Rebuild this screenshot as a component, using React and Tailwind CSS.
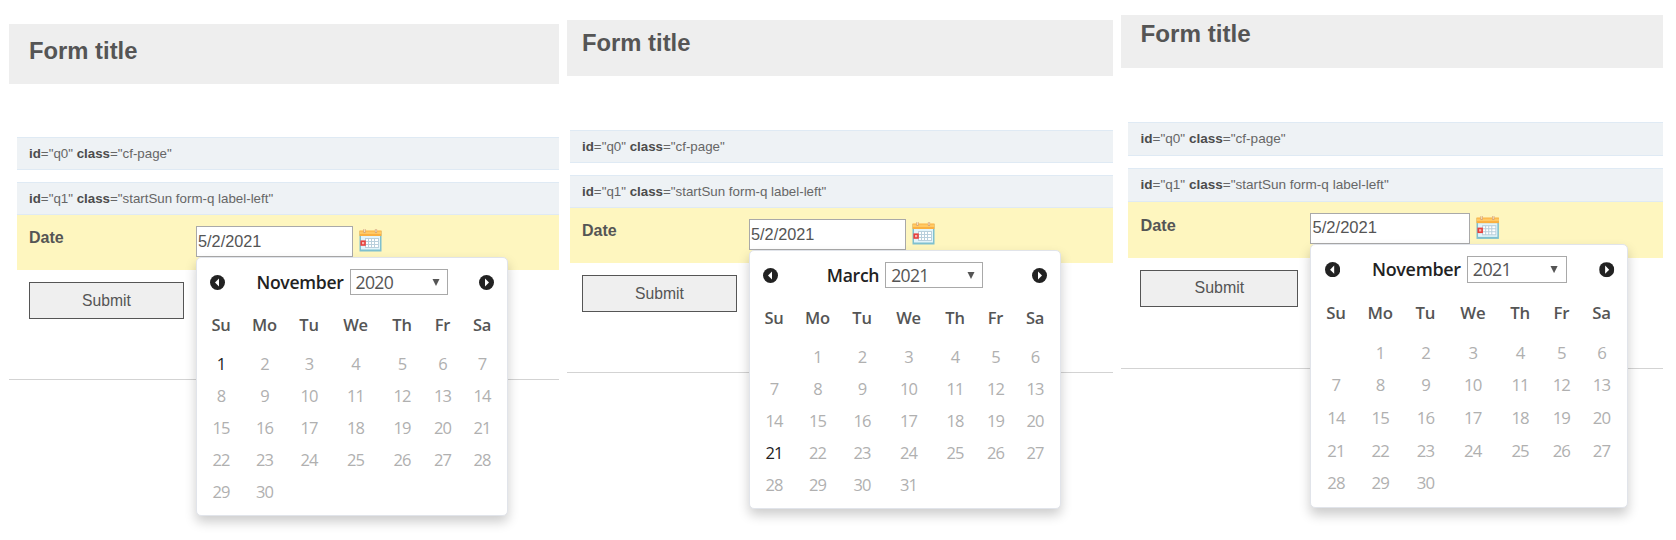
import clsx from 'clsx'

const WEEKDAYS = ['Su', 'Mo', 'Tu', 'We', 'Th', 'Fr', 'Sa']

const FORMS = [
  {
    id: 'nov-2020',
    month: 'November',
    year: '2020',
    offset: 0,
    days: 30,
    enabled: [1],
    panel: 'ml-[9px] mt-6 w-[550px]',
    header: 'h-[60px] mb-[53px] pl-5 pt-[13px]',
    body: 'pl-2',
  },
  {
    id: 'mar-2021',
    month: 'March',
    year: '2021',
    offset: 1,
    days: 31,
    enabled: [21],
    panel: 'ml-2 mt-5 w-[546px]',
    header: 'h-[56px] mb-[54px] pl-[15px] pt-[9px]',
    body: 'pl-[3px]',
  },
  {
    id: 'nov-2021',
    month: 'November',
    year: '2021',
    offset: 1,
    days: 30,
    enabled: [],
    panel: 'ml-2 mt-[15px] w-[532.4px] [zoom:1.018]',
    header: 'h-[52px] mb-[53px] pl-[19px] pt-[5px]',
    body: 'pl-[7px]',
  },
]

function CalendarIcon() {
  return (
    <svg width="23" height="23" viewBox="0 0 23 23" className="ml-[5.5px] mt-[3px]">
      <rect x="0.5" y="2" width="22" height="20.5" fill="#7fc0cf" />
      <rect x="2" y="7" width="19" height="13.5" fill="#e3f4fa" />
      <rect x="0.5" y="1.5" width="22" height="5.5" fill="#fbb040" />
      <rect x="0.5" y="2.5" width="22" height="2.5" fill="#ffc965" />
      <path d="M5.5 0v4M17 0v4" stroke="#d9a877" strokeWidth="2.2" />
      <path d="M5.5 0v3M17 0v3" stroke="#f4e3c4" strokeWidth="0.9" />
      <rect x="6" y="9" width="14" height="10" fill="#b9cfdc" />
      <path
        d="M7 10h2v2H7zM10 10h2v2h-2zM13 10h2v2h-2zM16 10h3v2h-3zM7 13h2v2H7zM10 13h2v2h-2zM13 13h2v2h-2zM16 13h3v2h-3zM7 16h2v2H7zM10 16h2v2h-2zM13 16h2v2h-2zM16 16h3v2h-3z"
        fill="#fff"
      />
      <rect x="2.2" y="12.2" width="3.8" height="3.8" fill="#f8b6b0" stroke="#e8403c" strokeWidth="1.6" />
    </svg>
  )
}

function NavArrow({ next }) {
  return (
    <svg width="15" height="15" viewBox="0 0 15 15" className={clsx(next && 'rotate-180')}>
      <circle cx="7.5" cy="7.5" r="7.5" fill="#222" />
      <path d="M9 3.5v8L5 7.5z" fill="#fff" />
    </svg>
  )
}

function DatePicker({ form }) {
  const cells = [
    ...Array.from({ length: form.offset }, () => null),
    ...Array.from({ length: form.days }, (_, i) => i + 1),
  ]
  return (
    <div className="absolute left-0 top-full z-10 h-[259px] w-[312px] rounded-[5px] border border-[#e1e4ea] bg-white font-['Open_Sans','Noto_Sans',sans-serif] shadow-[0_6px_12px_rgba(0,0,0,0.2)]">
      <div className="mt-[11px] flex h-[26px] items-center justify-between px-[13px]">
        <NavArrow />
        <div className="flex items-center gap-[6px]">
          <span className="text-[17.6px] leading-[26px] font-semibold tracking-[-0.3px] text-[#222]">{form.month}</span>
          <div className="flex h-[26px] w-[98px] items-center justify-between border border-[#a9a9a9] pr-[7px] pl-[5px]">
            <span className="text-[17.6px] leading-6 tracking-[-0.7px] text-[#555]">{form.year}</span>
            <svg width="8" height="7" viewBox="0 0 8 7">
              <path d="M0.5 0h7L4 7z" fill="#555" />
            </svg>
          </div>
        </div>
        <NavArrow next />
      </div>
      <div className="mt-[14px] ml-[4px] grid grid-cols-[40px_47px_42px_51px_42px_39px_40px] text-center text-[16.5px] leading-8">
        {WEEKDAYS.map((day) => (
          <span key={day} className="mb-[7px] font-semibold tracking-[-0.2px] text-[#555]">
            {day}
          </span>
        ))}
        {cells.map((day, i) => (
          <span
            key={i}
            className={clsx(
              'tracking-[-0.9px]',
              form.enabled.includes(day) ? 'font-medium text-[#222]' : 'text-[#b0b0b0]',
            )}
          >
            {day}
          </span>
        ))}
      </div>
    </div>
  )
}

function InfoRow({ id, className }) {
  return (
    <div className="h-[33px] border-y border-[#dfeaf4] bg-[#eef2f5] pl-3 text-[13.33px] leading-[31px] text-[#666]">
      <b className="text-[#4c4c4c]">id</b>="{id}" <b className="text-[#4c4c4c]">class</b>="{className}"
    </div>
  )
}

function FormPanel({ form }) {
  return (
    <section className={clsx('shrink-0', form.panel)}>
      <header className={clsx('bg-[#eee]', form.header)}>
        <h1 className="text-[23.8px] leading-7 font-bold text-[#555]">Form title</h1>
      </header>
      <div className={form.body}>
        <InfoRow id="q0" className="cf-page" />
        <div className="h-3" />
        <InfoRow id="q1" className="startSun form-q label-left" />
        <div className="flex h-[55px] items-start bg-[#fef6bf] pt-[11px] pl-3">
          <label className="w-[167px] pt-[2px] text-base leading-5 font-bold text-[#555]">Date</label>
          <div className="relative">
            <div className="h-[31px] w-[157px] border border-[#a9a9a9] bg-white pl-px text-[16.3px] leading-[28px] text-[#555]">
              5/2/2021
            </div>
            <DatePicker form={form} />
          </div>
          <CalendarIcon />
        </div>
        <button className="mt-3 ml-3 block h-[37px] w-[155px] border border-[#555] bg-[#efefef] text-[15.7px] leading-[34px] text-[#555]">
          Submit
        </button>
      </div>
      <hr className="mt-[60px] border-[#d3d3d3]" />
    </section>
  )
}

export default function App() {
  return (
    <main className="flex h-[540px] w-[1676px] items-start overflow-hidden bg-white font-['Liberation_Sans',Arial,sans-serif]">
      {FORMS.map((form) => (
        <FormPanel key={form.id} form={form} />
      ))}
    </main>
  )
}
